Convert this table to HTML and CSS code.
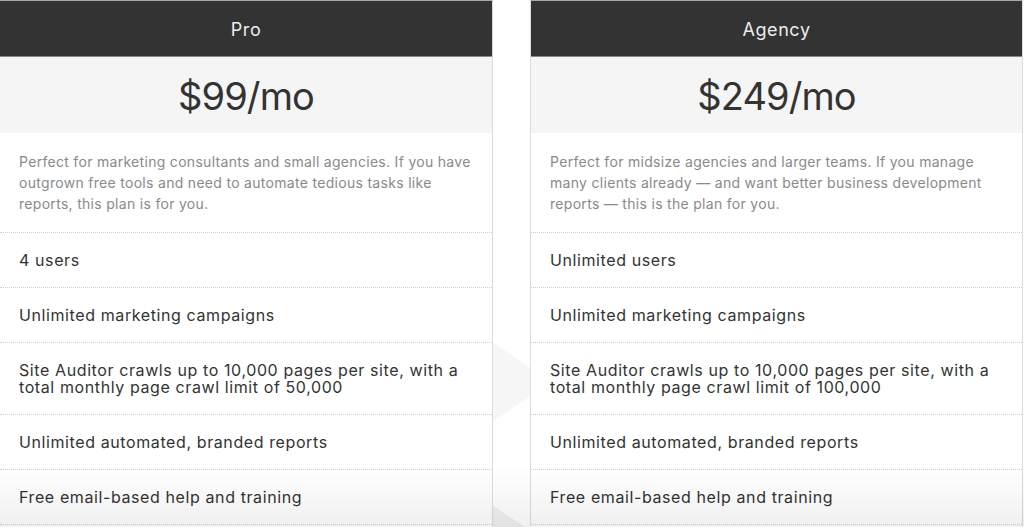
FILE: index.html
```html
<!DOCTYPE html>
<html lang="en">
<head>
<meta charset="utf-8">
<title>Plans</title>
<link rel="stylesheet" href="styles.css">
</head>
<body>
<div class="plans">
  <section class="plan">
    <h2 class="plan-name">Pro</h2>
    <div class="plan-price">$99/mo</div>
    <p class="plan-desc">Perfect for marketing consultants and small agencies. If you have outgrown free tools and need to automate tedious tasks like reports, this plan is for you.</p>
    <ul class="features">
      <li>4 users</li>
      <li>Unlimited marketing campaigns</li>
      <li>Site Auditor crawls up to 10,000 pages per site, with a total monthly page crawl limit of 50,000</li>
      <li>Unlimited automated, branded reports</li>
      <li>Free email-based help and training</li>
    </ul>
  </section>
  <section class="plan">
    <h2 class="plan-name">Agency</h2>
    <div class="plan-price">$249/mo</div>
    <p class="plan-desc">Perfect for midsize agencies and larger teams. If you manage many clients already — and want better business development reports — this is the plan for you.</p>
    <ul class="features">
      <li>Unlimited users</li>
      <li>Unlimited marketing campaigns</li>
      <li>Site Auditor crawls up to 10,000 pages per site, with a total monthly page crawl limit of 100,000</li>
      <li>Unlimited automated, branded reports</li>
      <li>Free email-based help and training</li>
    </ul>
  </section>
  <div class="arrow arrow-mid"></div>
  <div class="arrow arrow-low"></div>
  <div class="fade"></div>
</div>
</body>
</html>
```

FILE: styles.css
```css
* { box-sizing: border-box; }
html, body { margin: 0; padding: 0; background: #fff; }
body {
  font-family: Inter, "Liberation Sans", Arial, sans-serif;
  color: #333;
  width: 1024px;
  height: 527px;
  overflow: hidden;
}
.plans {
  position: relative;
  display: grid;
  grid-template-columns: 494px 493px;
  column-gap: 37px;
  margin-left: -1px;
  height: 527px;
  overflow: hidden;
}
.plan {
  position: relative;
  z-index: 1;
  background: #fff;
  border-top: 1px solid #a9a9a9;
  border-left: 1px solid #dcdcdc;
  border-right: 1px solid #dcdcdc;
  height: 526px;
  display: flex;
  flex-direction: column;
}
.plan-name {
  margin: 0;
  height: 56px;
  background: #333;
  border-bottom: 1px solid #8a8a8a;
  color: #ececec;
  font-size: 18px;
  font-weight: 400;
  line-height: 57px;
  text-align: center;
  letter-spacing: 0.6px;
}
.plan-price {
  height: 76px;
  background: #f5f5f5;
  font-size: 38px;
  line-height: 78px;
  text-align: center;
  color: #333;
  letter-spacing: -0.9px;
}
.plan-desc {
  margin: 0;
  padding: 18px 18px 18px 19px;
  font-size: 14px;
  line-height: 21px;
  color: #8a8a8a;
  letter-spacing: 0.3px;
}
.features {
  list-style: none;
  margin: 0;
  padding: 0;
}
.features li {
  border-top: 1px dotted #cfcfcf;
  padding: 19px 18px 18px 19px;
  font-size: 16px;
  line-height: 17px;
  color: #333;
  letter-spacing: 0.6px;
}
.features li:last-child {
  border-bottom: 1px dotted #cfcfcf;
}
.arrow {
  position: absolute;
  z-index: 0;
  width: 0;
  height: 0;
}
.arrow-mid {
  left: 493px;
  top: 342px;
  border-top: 40px solid transparent;
  border-bottom: 40px solid transparent;
  border-left: 60px solid #f6f6f6;
}
.arrow-low {
  left: 493px;
  top: 505px;
  border-top: 40px solid transparent;
  border-bottom: 40px solid transparent;
  border-left: 60px solid #f0f0f0;
}
.fade {
  position: absolute;
  z-index: 2;
  left: 0;
  right: 0;
  bottom: 0;
  height: 62px;
  background: linear-gradient(to bottom, rgba(0,0,0,0), rgba(0,0,0,0.06));
  pointer-events: none;
}
```
